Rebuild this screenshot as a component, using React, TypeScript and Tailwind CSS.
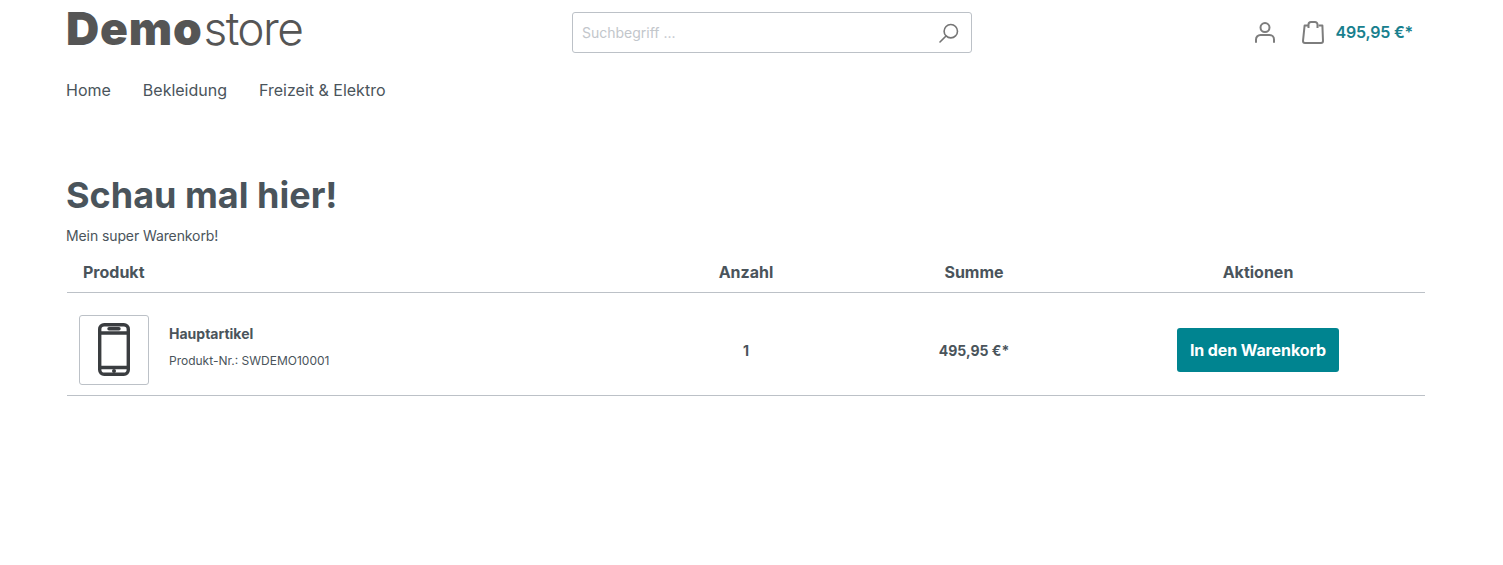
import React from 'react';

const PhoneIcon = () => (
  <svg width="32" height="53" viewBox="0 0 32 53" fill="none" stroke="#3a3d40" strokeWidth="3.400">
    <rect x="1.700" y="1.700" width="28.600" height="49.600" rx="4.500" />
    <path d="M1.700 10h28.600M1.700 44.500h28.600" />
    <path d="M11 5.800h10" strokeLinecap="round" />
    <circle cx="16" cy="48" r="2" fill="#3a3d40" stroke="none" />
  </svg>
);

const SearchIcon = () => (
  <svg width="20" height="20" viewBox="0 0 20 20" fill="none" stroke="#757575" strokeWidth="1.600">
    <circle cx="11.800" cy="8.200" r="6.700" />
    <path d="M7 13 1 19" strokeLinecap="round" />
  </svg>
);

const UserIcon = () => (
  <svg width="20" height="21" viewBox="0 0 20 21" fill="none" stroke="#7d7d7d" strokeWidth="2">
    <circle cx="10" cy="5.600" r="4.500" />
    <path d="M1 20v-2.500A4.500 4.500 0 0 1 5.500 13h9a4.500 4.500 0 0 1 4.500 4.500V20" strokeLinecap="round" />
  </svg>
);

const BagIcon = () => (
  <svg width="22" height="23" viewBox="0 0 22 23" fill="none" stroke="#7d7d7d" strokeWidth="2">
    <path d="M6.500 4.500H2.600L1 20a2 2 0 0 0 2 2h16a2 2 0 0 0 2-2l-.6-15.500h-3.900" strokeLinejoin="round" />
    <path d="M6.500 7V3.500a2.500 2.500 0 0 1 2.500-2.500h4a2.500 2.500 0 0 1 2.500 2.500V7" />
  </svg>
);

const App: React.FC = () => {
  return (
    <div className="min-h-[565px] bg-white font-['Inter',sans-serif] text-[#4a545b]">
      <header className="px-[66px]">
        <div className="flex h-[64px] items-start">
          <div className="w-[506px] text-[46px] leading-[56px] text-[#555555]">
            <span className="font-black tracking-[0.8px]">Demo</span>
            <span className="ml-[1px] font-light tracking-[-1.6px]">store</span>
          </div>
          <div className="mt-[12px] flex h-[41px] w-[400px] items-center justify-between rounded-[3px] border border-[#bcc1c7] pl-[9px] pr-[12px]">
            <span className="text-sm text-[#c2c6cb]">Suchbegriff ...</span>
            <SearchIcon />
          </div>
          <div className="ml-auto mr-[24px] mt-[21px] flex items-center">
            <div className="-translate-y-[1px]">
              <UserIcon />
            </div>
            <div className="ml-[27px] -translate-y-[1px]">
              <BagIcon />
            </div>
            <span className="ml-[11px] -translate-y-[1px] text-base font-semibold tracking-[-0.2px] text-[#18808e]">495,95 €*</span>
          </div>
        </div>
        <nav className="flex gap-[32px] pt-[16px] text-base leading-[20px]">
          <span>Home</span>
          <span>Bekleidung</span>
          <span>Freizeit &amp; Elektro</span>
        </nav>
      </header>

      <main className="pl-[66px] pr-[78px] pt-[71px]">
        <h1 className="text-[36px] font-bold leading-[48px]">Schau mal hier!</h1>
        <p className="mt-[7px] text-sm leading-[20px] tracking-[-0.1px]">Mein super Warenkorb!</p>

        <div className="ml-[1px] mt-[6px]">
          <div className="grid h-[41px] grid-cols-[570px_218px_236px_334px] items-center border-b border-[#bcc1c7] text-base font-bold">
            <div className="pl-[16px]">Produkt</div>
            <div className="text-center">Anzahl</div>
            <div className="pl-[2px] text-center">Summe</div>
            <div className="text-center">Aktionen</div>
          </div>
          <div className="grid h-[103px] grid-cols-[570px_218px_236px_334px] items-center border-b border-[#bcc1c7] pt-[13px] text-sm font-bold">
            <div className="mb-[2px] flex items-center pl-[12px]">
              <div className="flex h-[70px] w-[70px] items-center justify-center rounded-[3px] border border-[#bcc1c7]">
                <PhoneIcon />
              </div>
              <div className="mb-[4px] ml-[20px]">
                <div className="text-sm leading-[20px]">Hauptartikel</div>
                <div className="mt-[7px] text-xs font-normal leading-[20px]">Produkt-Nr.: SWDEMO10001</div>
              </div>
            </div>
            <div className="text-center">1</div>
            <div className="pl-[2px] text-center">495,95 €*</div>
            <div className="mb-[2px] flex justify-center">
              <button className="h-[44px] rounded-[3px] bg-[#008490] px-[13px] text-base font-bold tracking-[-0.1px] text-white">
                In den Warenkorb
              </button>
            </div>
          </div>
        </div>
      </main>
    </div>
  );
};

export default App;
